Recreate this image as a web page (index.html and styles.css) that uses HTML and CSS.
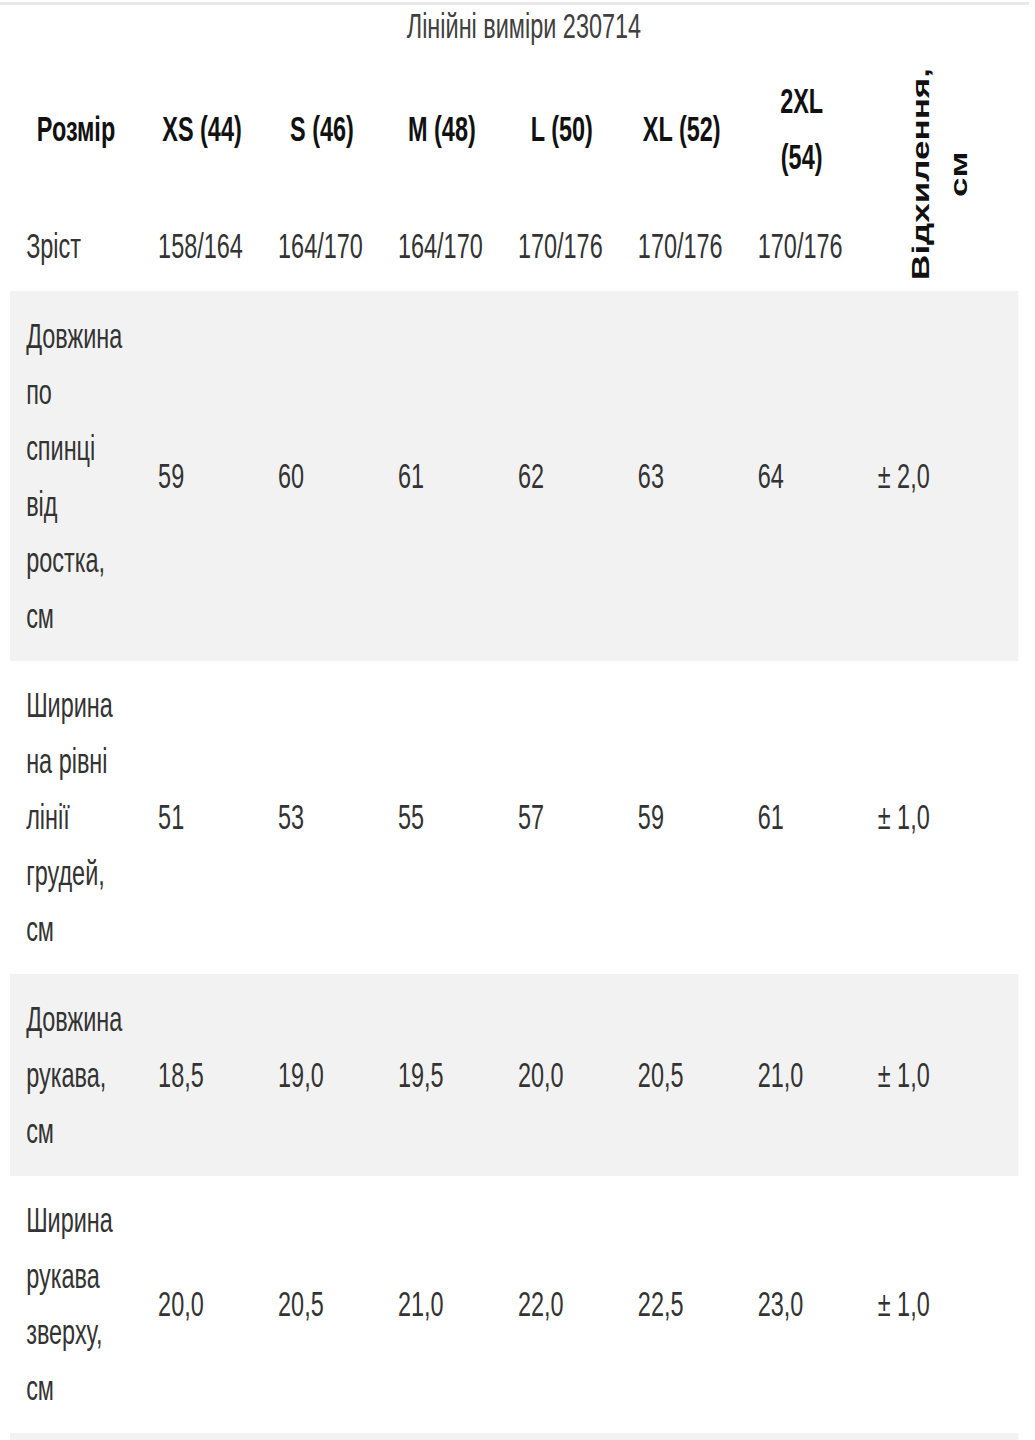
FILE: index.html
```html
<!DOCTYPE html>
<html lang="uk">
<head>
<meta charset="utf-8">
<title>Лінійні виміри 230714</title>
<link rel="stylesheet" href="styles.css">
</head>
<body>
<div class="frame">
<div class="sheet">
  <div class="rule"></div>
  <div class="title">Лінійні виміри 230714</div>
  <table class="sizes">
    <colgroup>
      <col class="c-name">
      <col class="c-size"><col class="c-size"><col class="c-size">
      <col class="c-size"><col class="c-size"><col class="c-size">
      <col class="c-dev">
    </colgroup>
    <thead>
      <tr class="head">
        <th>Розмір</th>
        <th>XS (44)</th>
        <th>S (46)</th>
        <th>M (48)</th>
        <th>L (50)</th>
        <th>XL (52)</th>
        <th>2XL<br>(54)</th>
        <th class="dev-cell" rowspan="2"><div class="dev-wrap"><span class="dev">Відхилення,<br>см</span></div></th>
      </tr>
      <tr class="height">
        <td>Зріст</td>
        <td>158/164</td>
        <td>164/170</td>
        <td>164/170</td>
        <td>170/176</td>
        <td>170/176</td>
        <td>170/176</td>
      </tr>
    </thead>
    <tbody>
      <tr class="shade">
        <td class="name">Довжина<br>по<br>спинці<br>від<br>ростка,<br>см</td>
        <td>59</td><td>60</td><td>61</td><td>62</td><td>63</td><td>64</td><td>± 2,0</td>
      </tr>
      <tr>
        <td class="name">Ширина<br>на рівні<br>лінії<br>грудей,<br>см</td>
        <td>51</td><td>53</td><td>55</td><td>57</td><td>59</td><td>61</td><td>± 1,0</td>
      </tr>
      <tr class="shade">
        <td class="name">Довжина<br>рукава,<br>см</td>
        <td>18,5</td><td>19,0</td><td>19,5</td><td>20,0</td><td>20,5</td><td>21,0</td><td>± 1,0</td>
      </tr>
      <tr>
        <td class="name">Ширина<br>рукава<br>зверху,<br>см</td>
        <td>20,0</td><td>20,5</td><td>21,0</td><td>22,0</td><td>22,5</td><td>23,0</td><td>± 1,0</td>
      </tr>
    </tbody>
  </table>
  <div class="next-row"></div>
</div>
</div>
</body>
</html>
```

FILE: styles.css
```css
html, body {
  margin: 0;
  padding: 0;
  background: #ffffff;
  overflow-x: hidden;
}

.frame {
  width: 1035px;
  overflow: hidden;
}

.sheet {
  width: 1540px;
  transform: scaleX(0.67);
  transform-origin: 0 0;
  font-family: "Liberation Sans", Arial, sans-serif;
  color: #333333;
}

.rule {
  margin-top: 2px;
  height: 3px;
  background: #e8e8e8;
  margin-right: 4px;
}

.title {
  font-size: 35px;
  line-height: 42px;
  height: 51px;
  text-align: center;
  color: #404040;
  padding-left: 24px;
}

.sizes {
  margin-left: 15px;
  width: 1505px;
  border-collapse: collapse;
  border-spacing: 0;
  table-layout: fixed;
  font-size: 35px;
  line-height: 56px;
}

.c-name { width: 197px; }
.c-size { width: 179px; }
.c-dev { width: 234px; }

.sizes th,
.sizes td {
  padding: 16.5px 8px 17px 24px;
  vertical-align: middle;
  white-space: nowrap;
}

.sizes th {
  font-weight: bold;
  color: #111111;
  text-align: center;
  padding-left: 16px;
  padding-right: 16px;
}

.sizes td {
  text-align: left;
  font-weight: normal;
}

.sizes .dev-cell {
  padding: 0;
}

.dev-wrap {
  display: flex;
  justify-content: center;
  align-items: center;
}

.dev {
  writing-mode: vertical-rl;
  transform: rotate(180deg);
  text-align: center;
  line-height: 58px;
  font-weight: bold;
  color: #111111;
}

.shade td {
  background: #f2f2f2;
  box-shadow: 3px 0 0 #f2f2f2;
}

.shade td:last-child {
  box-shadow: none;
}

.next-row {
  margin-left: 15px;
  width: 1505px;
  height: 10px;
  background: #f2f2f2;
}
```
